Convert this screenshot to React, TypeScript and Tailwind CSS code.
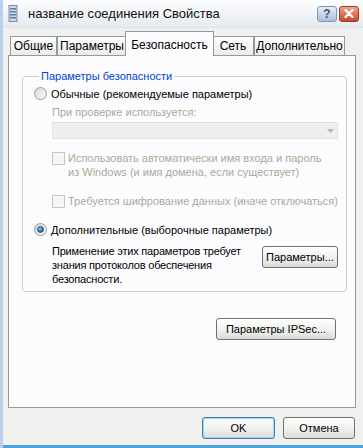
import React from "react";

const FONT = { fontFamily: '"Liberation Sans", Arial, sans-serif' };

function Radio({ checked }: { checked?: boolean }) {
  return (
    <span className="relative inline-flex w-[13px] h-[13px] shrink-0 items-center justify-center rounded-full border border-[#9a9a9a] bg-gradient-to-br from-[#d8d8d8] to-[#fbfbfb]">
      {checked && (
        <span className="w-[7px] h-[7px] rounded-full bg-[radial-gradient(circle_at_35%_35%,#8fd1f0,#1d5f9e_70%)] border border-[#254b7a]" />
      )}
    </span>
  );
}

function Check() {
  return <span className="inline-block w-[13px] h-[13px] shrink-0 border border-[#c9c7ba] bg-[#f6f6f4]" />;
}

function XpButton({ children, def, className = "" }: { children: React.ReactNode; def?: boolean; className?: string }) {
  return (
    <div
      className={`flex items-center justify-center h-[22px] rounded-[3px] border text-[11px] text-black whitespace-nowrap bg-gradient-to-b from-[#ffffff] via-[#f1f1ef] to-[#dcdcd6] ${
        def ? "border-[#3c7fb1] shadow-[inset_0_0_0_1px_#a6d0ee]" : "border-[#707070]"
      } ${className}`}
    >
      {children}
    </div>
  );
}

const TABS = ["Общие", "Параметры", "Безопасность", "Сеть", "Дополнительно"];
const TAB_W = [47, 70, 89, 42, 91];

export default function App() {
  return (
    <div className="w-[363px] h-[448px] overflow-hidden bg-[#f0f0ee] flex flex-col border-l-[3px] border-[#b9d1ea] text-black" style={FONT}>
      {/* Title bar */}
      <div className="h-[28px] shrink-0 flex items-center bg-gradient-to-b from-[#fdfdfe] to-[#e6ebf1] border-b border-[#dfe4ea] pl-[5px] pr-[4px]">
        <svg width="10" height="17" viewBox="0 0 10 17" className="shrink-0">
          <rect x="1" y="0.5" width="8" height="16" fill="#cfd8e4" stroke="#7d8ea6" />
          <rect x="2" y="3" width="6" height="1.5" fill="#5c7fb3" />
          <rect x="2" y="6" width="6" height="1.5" fill="#5c7fb3" />
          <rect x="2" y="9" width="6" height="1.5" fill="#5c7fb3" />
          <rect x="2" y="12" width="6" height="1.5" fill="#5c7fb3" />
        </svg>
        <span className="ml-[10px] text-[13px] text-[#111]">название соединения Свойства</span>
        <div className="ml-auto flex items-center gap-[2px]">
          <div className="w-[20px] h-[16px] rounded-[3px] border border-[#7f97b3] bg-gradient-to-b from-[#e6eef8] to-[#a9c0dc] flex items-center justify-center text-[12px] font-bold text-[#44546a] leading-none">
            ?
          </div>
          <div className="w-[20px] h-[16px] rounded-[3px] border border-[#9b3b2c] bg-gradient-to-b from-[#f0a58c] to-[#c8452a] flex items-center justify-center">
            <svg width="10" height="9" viewBox="0 0 10 9">
              <path d="M1.5 1 L8.5 8 M8.5 1 L1.5 8" stroke="#fff" strokeWidth="2.2" strokeLinecap="round" />
            </svg>
          </div>
        </div>
      </div>

      {/* Tabs */}
      <div className="h-[27px] shrink-0 flex items-end pl-[7px]">
        {TABS.map((t, i) => {
          const sel = i === 2;
          return (
            <div
              key={t}
              style={{ width: TAB_W[i] }}
              className={
                sel
                  ? "relative z-10 -mx-[2px] -mb-px h-[25px] border border-b-0 border-[#919b9c] bg-[#fcfcfe] flex items-start justify-center pt-[4px] text-[12px] whitespace-nowrap"
                  : "h-[19px] border border-b-0 border-[#919b9c] bg-gradient-to-b from-[#fefefe] to-[#ececea] flex items-center justify-center text-[12px] whitespace-nowrap"
              }
            >
              {t}
            </div>
          );
        })}
      </div>

      {/* Panel */}
      <div className="ml-[5px] mr-[7px] h-[353px] shrink-0 border border-[#919b9c] bg-[#fcfcfe] flex flex-col pl-[13px] pr-[19px] pt-[12px] text-[11px]">
        <fieldset className="border border-[#d0d0bf] rounded-[4px] mr-[-9px] pl-[11px] pr-[8px] pb-[5px]">
          <legend className="px-[2px] ml-[5px] text-[#0046d5] text-[11px]">Параметры безопасности</legend>
          <div className="flex items-center gap-[4px] mt-[1px]">
            <Radio />
            <span>Обычные (рекомендуемые параметры)</span>
          </div>
          <div className="pl-[18px] text-[#aca899]">
            <div className="mt-[4px] leading-[13px]">При проверке используется:</div>
            <div className="mt-[3px] h-[17px] bg-[#efefed] border border-[#e2e2de] flex justify-end items-center pr-[3px]">
              <svg width="7" height="4" viewBox="0 0 7 4">
                <path d="M0 0 H7 L3.5 4 Z" fill="#b8b8b0" />
              </svg>
            </div>
            <div className="flex items-start gap-[3px] mt-[13px]">
              <Check />
              <div className="leading-[14px] -mt-px whitespace-nowrap">
                <div>Использовать автоматически имя входа и пароль</div>
                <div>из Windows (и имя домена, если существует)</div>
              </div>
            </div>
            <div className="flex items-center gap-[3px] mt-[14px]">
              <Check />
              <span className="whitespace-nowrap">Требуется шифрование данных (иначе отключаться)</span>
            </div>
          </div>
          <div className="flex items-center gap-[4px] mt-[12px]">
            <Radio checked />
            <span>Дополнительные (выборочные параметры)</span>
          </div>
          <div className="pl-[18px] flex items-start mt-[6px]">
            <div className="leading-[14px] flex-1 tracking-[-0.2px]">
              <div>Применение этих параметров требует</div>
              <div>знания протоколов обеспечения</div>
              <div>безопасности.</div>
            </div>
            <XpButton className="w-[76px] mt-[2px]">Параметры...</XpButton>
          </div>
        </fieldset>
        <div className="flex justify-end mt-[26px]">
          <XpButton className="w-[120px]">Параметры IPSec...</XpButton>
        </div>
      </div>

      {/* Footer buttons */}
      <div className="flex justify-end gap-[8px] pr-[8px] mt-[9px]">
        <XpButton def className="w-[73px]">OK</XpButton>
        <XpButton className="w-[72px]">Отмена</XpButton>
      </div>
      <div className="mt-auto h-[3px] bg-[#4aa3df]" />
    </div>
  );
}
